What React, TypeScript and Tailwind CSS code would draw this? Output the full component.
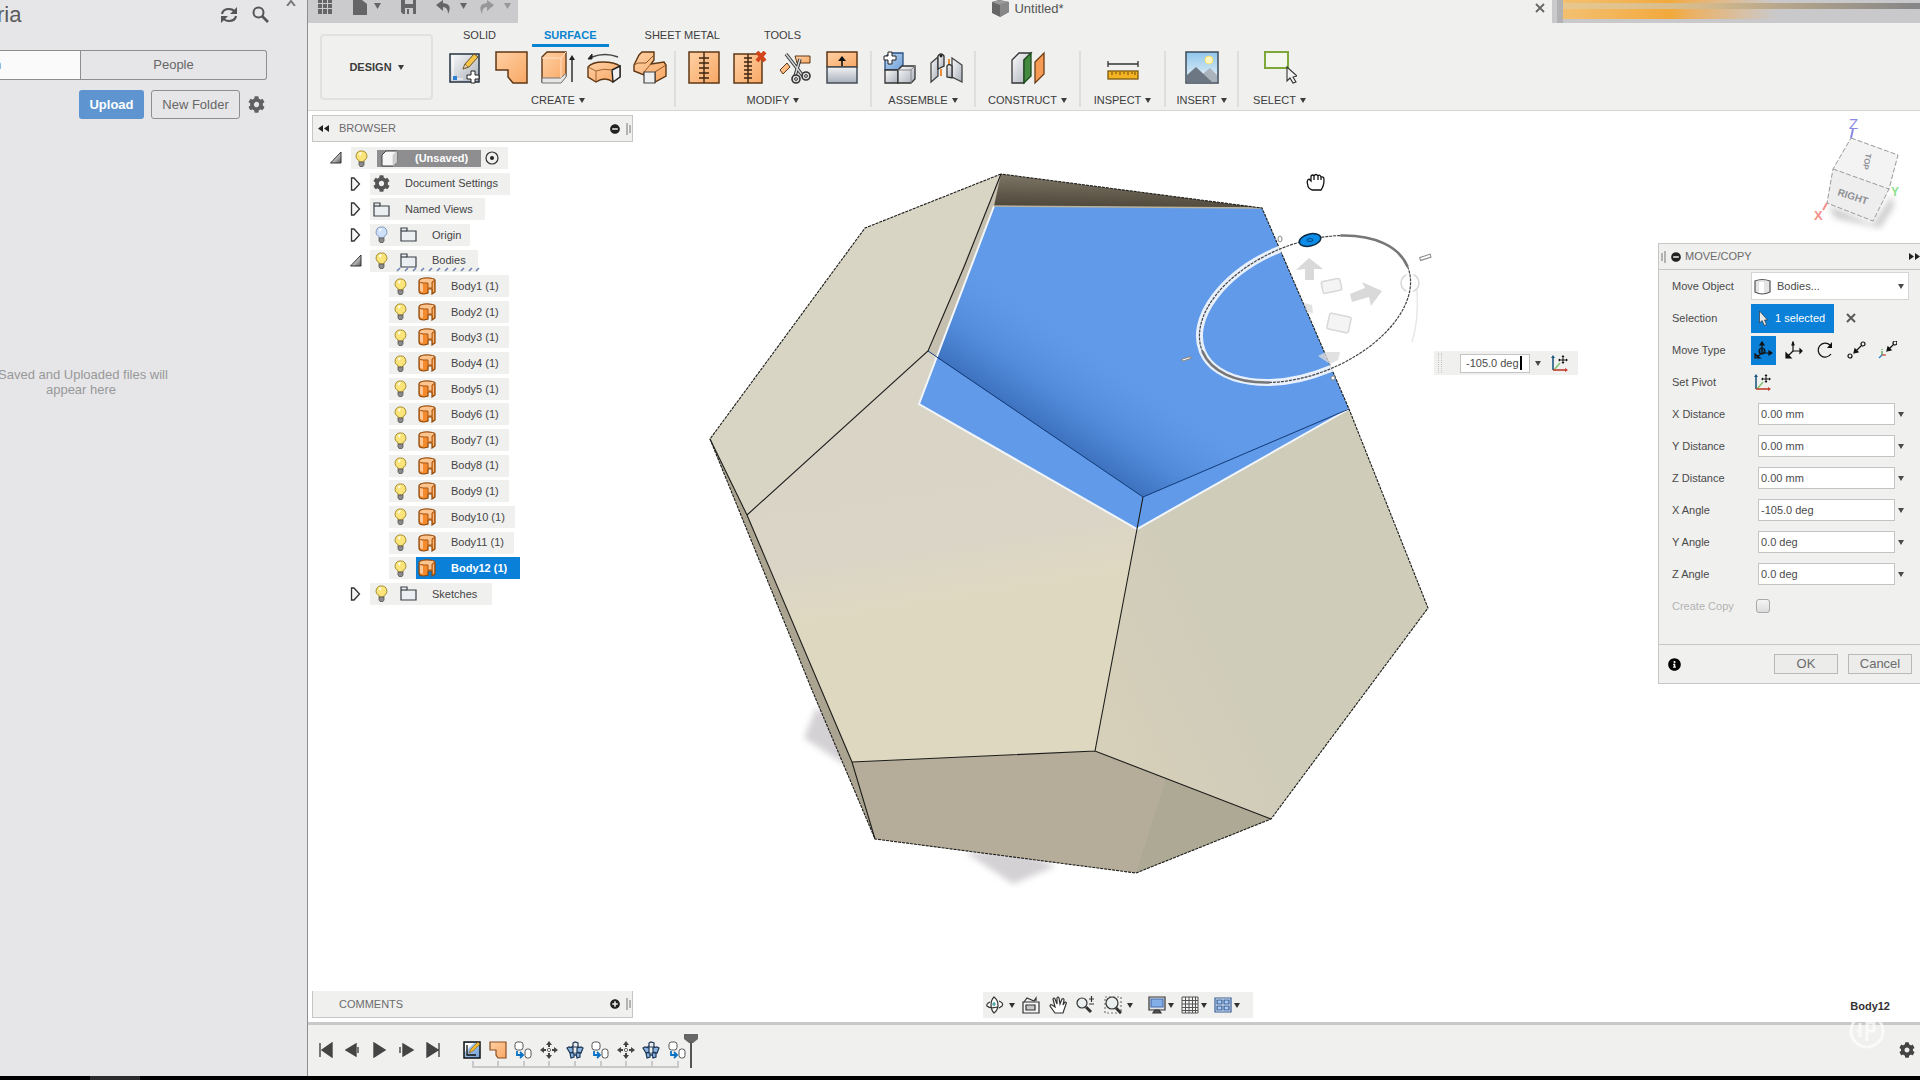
import type { ReactNode } from 'react'
import { FaCog, FaInfoCircle, FaMinusCircle, FaPlusCircle } from 'react-icons/fa'

/* ---------- small shared pieces ---------- */

function Caret({ className = '' }: { className?: string }) {
  return (
    <svg viewBox="0 0 6 5" className={`w-[6px] h-[5px] shrink-0 ${className}`}>
      <path d="M0 0H6L3 5Z" fill="currentColor" />
    </svg>
  )
}

function Bars({ className = '' }: { className?: string }) {
  return (
    <svg viewBox="0 0 5 12" className={`w-[5px] h-[12px] shrink-0 ${className}`}>
      <path d="M1 0V12M4 2V10" stroke="#777" />
    </svg>
  )
}

function Rewind({ className = '' }: { className?: string }) {
  return (
    <svg viewBox="0 0 11 7" className={`w-[11px] h-[7px] shrink-0 ${className}`}>
      <path d="M5 0V7L0 3.5ZM11 0V7L6 3.5Z" fill="#222" />
    </svg>
  )
}

function Gradients() {
  return (
    <svg className="absolute w-0 h-0" aria-hidden="true">
      <defs>
        <linearGradient id="orange" x1="0" y1="0" x2="1" y2="1">
          <stop offset="0" stopColor="#ffd0a4" />
          <stop offset="1" stopColor="#f8a865" />
        </linearGradient>
        <linearGradient id="steel" x1="0" y1="0" x2="1" y2="1">
          <stop offset="0" stopColor="#fbfbfb" />
          <stop offset="1" stopColor="#a9afb9" />
        </linearGradient>
        <linearGradient id="steelDown" x1="0" y1="0" x2="0" y2="1">
          <stop offset="0" stopColor="#f2f3f4" />
          <stop offset="1" stopColor="#a8b0ba" />
        </linearGradient>
        <linearGradient id="sky" x1="0" y1="0" x2="0" y2="1">
          <stop offset="0" stopColor="#8fc6ec" />
          <stop offset="1" stopColor="#eef4f6" />
        </linearGradient>
        <linearGradient id="blue" x1="0" y1="0" x2="1" y2="1">
          <stop offset="0" stopColor="#bcd6f2" />
          <stop offset="1" stopColor="#6f9fd6" />
        </linearGradient>
        <linearGradient id="tri" x1="0" y1="0" x2="1" y2="1">
          <stop offset="0.4" stopColor="#ddd" />
          <stop offset="1" stopColor="#555" />
        </linearGradient>
      </defs>
    </svg>
  )
}

/* ---------- ribbon icons ---------- */

const ribbonIcons: Record<string, ReactNode> = {
  sketch: (
    <>
      <rect x="1" y="3" width="29" height="28" fill="url(#steel)" stroke="#233242" strokeWidth="1.5" />
      <path d="M4 6V28H14" fill="none" stroke="#fff" />
      <path d="M4 25h4v4H4z" fill="#2f7fd0" />
      <path d="M14 18l2-5 9-10 4 3-9 10z" fill="#f5c54a" stroke="#6b5327" />
      <path d="M14 18l2-5 3 3z" fill="#e8d5b5" stroke="#6b5327" strokeWidth=".7" />
      <path d="M22 20h4v4h4v4h-4v4h-4v-4h-4v-4h4z" fill="#fff" stroke="#222" />
    </>
  ),
  patch: <path d="M1 1H32V32H18L13 26V19H1Z" fill="url(#orange)" stroke="#5e3714" strokeWidth="1.5" />,
  extrude: (
    <>
      <path d="M1 6L6 1H25V25L20 31H1Z" fill="url(#orange)" stroke="#5e3714" strokeWidth="1.4" />
      <path d="M1 27H20L25 22V26L20 32H1Z" fill="#e6e6e6" stroke="#777" />
      <path d="M20 7L25 1M20 7V27M1 7H20" stroke="#ffe3c9" fill="none" />
      <path d="M31 31V7" stroke="#222" strokeWidth="1.4" />
      <path d="M28 9L31 4L34 9Z" fill="#222" />
    </>
  ),
  revolve: (
    <>
      <path d="M1 16Q5 11 16 11T33 15V26L26 31Q18 25 9 31L1 26Z" fill="url(#orange)" stroke="#5e3714" strokeWidth="1.4" />
      <path d="M25 19L33 15V26L26 31Z" fill="#f1f1f1" stroke="#222" strokeWidth="1.4" />
      <path d="M1 16L9 20Q17 17 25 19M9 20V30" fill="none" stroke="#9b6534" />
      <path d="M5 6Q18 1 31 6" fill="none" stroke="#444" strokeWidth="1.4" />
      <path d="M1 8L5 3V8Z" fill="#222" stroke="#222" />
    </>
  ),
  sweep: (
    <>
      <path d="M1 14L6 4L9 1H21V9L18 13L31 11L33 14V25L22 31V22H11V24L1 20Z" fill="url(#orange)" stroke="#5e3714" strokeWidth="1.4" />
      <path d="M11 21L18 13M22 21L33 14M1 14L5 12H13L21 4" fill="none" stroke="#8c5526" />
      <path d="M11 21H22V32H11Z" fill="#eee" stroke="#444" strokeWidth="1.2" />
    </>
  ),
  stitch: (
    <>
      <rect x="2" y="1" width="30" height="31" fill="url(#orange)" stroke="#5e3714" strokeWidth="1.5" />
      <path d="M17 1V32M12 7H22M12 12H22M12 17H22M12 22H22M12 27H22" stroke="#3c2510" strokeWidth="1.4" />
    </>
  ),
  unstitch: (
    <>
      <rect x="1" y="3" width="28" height="29" fill="url(#orange)" stroke="#5e3714" strokeWidth="1.5" />
      <path d="M15 3V32M11 7H19M11 11H19M11 15H19M11 19H19M11 23H19M11 27H19" stroke="#3c2510" strokeWidth="1.4" />
      <path d="M24 1L32 10M32 1L24 10" stroke="#d3441a" strokeWidth="4" />
    </>
  ),
  trim: (
    <>
      <path d="M16 5H31V12H18Z" fill="url(#orange)" stroke="#5e3714" />
      <path d="M1 19L8 12L11 16L4 23Z" fill="url(#orange)" stroke="#5e3714" />
      <path d="M7 3L24 25M21 8L16 25" stroke="#333" strokeWidth="3.4" />
      <path d="M7 3L24 25M21 8L16 25" stroke="#d7dadd" strokeWidth="1.4" />
      <circle cx="17" cy="28" r="4" fill="#ddd" stroke="#333" strokeWidth="1.6" />
      <circle cx="27" cy="25" r="4" fill="#ddd" stroke="#333" strokeWidth="1.6" />
      <circle cx="17" cy="28" r="1.4" fill="#f0f0ef" stroke="#333" />
      <circle cx="27" cy="25" r="1.4" fill="#f0f0ef" stroke="#333" />
    </>
  ),
  reverse: (
    <>
      <rect x="2" y="1" width="30" height="15" fill="url(#orange)" stroke="#5e3714" strokeWidth="1.5" />
      <rect x="2" y="16" width="30" height="16" fill="url(#steelDown)" stroke="#444d57" strokeWidth="1.5" />
      <path d="M17 15V8" stroke="#111" strokeWidth="1.6" />
      <path d="M13 10L17 5L21 10Z" fill="#111" />
    </>
  ),
  component: (
    <>
      <path d="M2 6L7 2H20V14L15 19H2Z" fill="url(#blue)" stroke="#28507f" strokeWidth="1.3" />
      <path d="M2 19H15V32H2Z" fill="url(#steel)" stroke="#333" strokeWidth="1.3" />
      <path d="M15 19L19 15H32V28L28 32H15Z" fill="url(#steel)" stroke="#333" strokeWidth="1.3" />
      <path d="M15 19H28V32M28 19L32 15" fill="none" stroke="#888" />
      <path d="M5 1h4v4h4v4H9v4H5V9H1V5h4z" fill="#fff" stroke="#222" />
    </>
  ),
  joint: (
    <>
      <path d="M2 12L9 6V25L2 31Z" fill="url(#steel)" stroke="#444" strokeWidth="1.3" />
      <path d="M9 5Q12 1 15 5V15L9 18Z" fill="url(#steel)" stroke="#333" strokeWidth="1.3" />
      <circle cx="12" cy="5" r="1.4" fill="#222" />
      <path d="M12 18V25M20 8V14" stroke="#e88d3a" strokeWidth="2" />
      <path d="M23 7L33 14V31L23 26Z" fill="url(#steel)" stroke="#444" strokeWidth="1.3" />
      <path d="M18 15Q20 12 23 15V27L18 26Z" fill="url(#steel)" stroke="#333" strokeWidth="1.3" />
    </>
  ),
  plane: (
    <>
      <path d="M1 9L8 2H20L13 9V32H1Z" fill="url(#steel)" stroke="#333" strokeWidth="1.3" />
      <path d="M13 9L20 2V25L13 32Z" fill="#43893f" stroke="#1e4a1d" strokeWidth="1.3" />
      <path d="M24 11L33 2V23L24 32Z" fill="#f59b55" stroke="#6b3c14" strokeWidth="1.3" />
    </>
  ),
  measure: (
    <>
      <path d="M2 13H32M2 10V16M32 10V16" stroke="#333" strokeWidth="1.3" />
      <rect x="2" y="20" width="30" height="8" fill="#f4b322" stroke="#7d5a10" strokeWidth="1.3" />
      <path d="M6 21V24M10 21V23M14 21V24M18 21V23M22 21V24M26 21V23M29 21V24" stroke="#6b4b09" />
    </>
  ),
  image: (
    <>
      <rect x="1" y="1" width="32" height="31" fill="url(#sky)" stroke="#3b4957" strokeWidth="1.5" />
      <circle cx="24" cy="9" r="4" fill="#fff6c4" stroke="#f4e06a" />
      <path d="M14 26L25 17L32 24V31H14Z" fill="#aab2bc" />
      <path d="M2 24L11 16L27 31H2Z" fill="#6d7784" />
    </>
  ),
  select: (
    <>
      <rect x="2" y="1" width="23" height="16" fill="#f4f7ee" stroke="#7fa83a" strokeWidth="2" />
      <path d="M24 16V30L27 27L30 32L33 31L30 26L34 25Z" fill="#f2f2f2" stroke="#333" strokeWidth="1.1" />
    </>
  ),
}

const groups = [
  { label: 'CREATE', width: 'w-[234px]', icons: ['sketch', 'patch', 'extrude', 'revolve', 'sweep'] },
  { label: 'MODIFY', width: 'w-[196px]', icons: ['stitch', 'unstitch', 'trim', 'reverse'] },
  { label: 'ASSEMBLE', width: 'w-[104px]', icons: ['component', 'joint'] },
  { label: 'CONSTRUCT', width: 'w-[105px]', icons: ['plane'] },
  { label: 'INSPECT', width: 'w-[85px]', icons: ['measure'] },
  { label: 'INSERT', width: 'w-[73px]', icons: ['image'] },
  { label: 'SELECT', width: 'w-[81px]', icons: ['select'] },
]

/* ---------- data panel on the left ---------- */

function DataPanel() {
  return (
    <aside className="w-[308px] shrink-0 bg-[#e6e6e8] border-r border-[#8e8e90] overflow-hidden text-[13px] text-[#666]">
      <div className="flex items-start h-[50px]">
        <h1 className="-ml-[3px] text-[22px] leading-[30px] text-[#5a5a5c]">ria</h1>
        <div className="ml-auto flex items-start">
          <button aria-label="Refresh" className="mt-[6px] mr-[14px]">
            <svg viewBox="0 0 18 18" className="w-[18px] h-[18px]" fill="none" stroke="#555" strokeWidth="2.2">
              <path d="M2 8Q3 3 9 3Q13 3 15 6M16 10Q15 15 9 15Q5 15 3 12" />
              <path d="M17 1V8H10ZM1 17V10H8Z" fill="#555" stroke="none" />
            </svg>
          </button>
          <button aria-label="Search" className="mt-[6px] mr-[17px]">
            <svg viewBox="0 0 17 17" className="w-[17px] h-[17px]" fill="none" stroke="#555">
              <circle cx="6.500" cy="6.500" r="5" strokeWidth="2" />
              <path d="M10 10L16 16" strokeWidth="2.600" />
            </svg>
          </button>
          <button aria-label="Close" className="mr-[11px]">
            <svg viewBox="0 0 10 6" className="w-[10px] h-[6px]" stroke="#777" strokeWidth="2">
              <path d="M1 6L5 1L9 6" fill="none" />
            </svg>
          </button>
        </div>
      </div>
      <div className="flex h-[30px] mr-[40px] border border-l-0 border-[#8e8e90] rounded-r-[3px]">
        <button className="w-[81px] bg-[#fafafa] border-r border-[#8e8e90] text-left"><span className="-ml-[6px]">n</span></button>
        <button className="flex-1">People</button>
      </div>
      <div className="flex items-center h-[29px] mt-[10px] pl-[79px] gap-[7px]">
        <button className="w-[65px] h-full bg-[#5e95d0] text-white font-bold rounded-[3px]">Upload</button>
        <button className="w-[89px] h-full border border-[#8e8e90] rounded-[3px]">New Folder</button>
        <button aria-label="Settings" className="ml-[1px]"><FaCog className="w-[17px] h-[17px] text-[#606062]" /></button>
      </div>
      <p className="mt-[248px] w-[166px] -ml-[2px] text-center leading-[15px] whitespace-nowrap text-[#98989a]">
        Saved and Uploaded files will<br />appear here
      </p>
    </aside>
  )
}

/* ---------- header ---------- */

function TitleBar() {
  return (
    <div className="flex h-[23px]">
      <div className="flex w-[210px] bg-[#cbcacc] text-[#666]">
        <svg viewBox="0 0 210 23" className="w-[210px] h-[23px]" fill="#656567">
          <path d="M10 0h4v3h-4zM15 0h4v3h-4zM20 0h4v3h-4zM10 4h4v4h-4zM15 4h4v4h-4zM20 4h4v4h-4zM10 9h4v5h-4zM15 9h4v5h-4zM20 9h4v5h-4z" />
          <path d="M45 0H54L59 4V15H45Z" />
          <path d="M66 3H73L69.500 9Z" />
          <path d="M93 0H108V14H95L93 12Z" />
          <path d="M97 0h8v4h-8zM97 8h8v6h-8z" fill="#cbcacc" />
          <path d="M99 9h2v5h-2z" />
          <path d="M135 0L128 5L135 11V7Q140 7 140 14Q145 4 135 3Z" />
          <path d="M152 3H159L155.500 9Z" />
          <g fill="#979799">
            <path d="M179 0L186 5L179 11V7Q174 7 174 14Q169 4 179 3Z" />
            <path d="M196 3H203L199.500 9Z" />
          </g>
        </svg>
      </div>
      <div className="flex-1 flex items-start justify-center relative">
        <div className="flex items-center gap-[5px] pr-[14px] text-[13px] leading-[17px] text-[#555]">
          <svg viewBox="0 0 17 17" className="w-[17px] h-[17px]">
            <path d="M0 2L7 0L17 2V12L8 17L0 13Z" fill="#666" />
            <path d="M0 2L8 5L17 2L8 0Z" fill="#999" />
            <path d="M8 5L17 2V12L8 17Z" fill="#888" />
          </svg>
          Untitled*
        </div>
        <button aria-label="Close document" className="absolute right-[7px] top-[3px]">
          <svg viewBox="0 0 10 10" className="w-[10px] h-[10px]" stroke="#666" strokeWidth="1.800">
            <path d="M1 1L9 9M9 1L1 9" />
          </svg>
        </button>
      </div>
      <div className="w-[368px] bg-[#c9c9cb] flex">
        <div className="w-[11px] border-r-[6px] border-[#b2b2b4]" />
        <div className="flex-1 h-[19px] bg-linear-to-r from-[#f3c070] via-[#f2a93b] via-30% to-[#c9c9cb] to-60%">
          <div className="mt-[3px] h-[6px] bg-linear-to-r from-[#e8c88e] via-[#d3b98c] via-40% to-[#858587]" />
        </div>
      </div>
    </div>
  )
}

function Ribbon() {
  return (
    <div className="flex h-[88px] border-b border-[#d6d6d6] text-[11px] text-[#3c3c3c]">
      <button className="ml-3 mt-[11px] w-[113px] h-[66px] shrink-0 border-2 border-[#e1e1e0] rounded-[4px] font-bold flex items-center justify-center gap-[6px]">
        DESIGN <Caret />
      </button>
      <div className="ml-[9px]">
        <nav className="flex gap-6 ml-[9px] h-[24px] leading-[24px]">
          <a href="#" className="px-3">SOLID</a>
          <a href="#" className="px-3 font-bold text-[#0a84d0] border-b-[3px] border-[#0a84d0]">SURFACE</a>
          <a href="#" className="px-3">SHEET METAL</a>
          <a href="#" className="px-2">TOOLS</a>
        </nav>
        <div className="flex mt-[4px]">
          {groups.map((group) => (
            <div key={group.label} className={`${group.width} h-[56px] border-r-2 border-[#dededd] last:border-r-0 flex flex-col items-center`}>
              <div className="flex gap-3">
                {group.icons.map((icon) => (
                  <button key={icon} aria-label={icon}>
                    <svg viewBox="0 0 34 34" className="block w-[34px] h-[34px]">{ribbonIcons[icon]}</svg>
                  </button>
                ))}
              </div>
              <button className="flex items-center gap-[4px] mt-[8px] leading-[14px]">
                {group.label} <Caret />
              </button>
            </div>
          ))}
        </div>
      </div>
    </div>
  )
}

/* ---------- browser tree ---------- */

function Bulb({ off = false }: { off?: boolean }) {
  return (
    <svg viewBox="0 0 13 17" className="w-[13px] h-[17px] shrink-0">
      <path d="M6.500 1A5 5 0 0 1 9 10.500V12H4V10.500A5 5 0 0 1 6.500 1Z" fill={off ? '#cfe0fa' : '#fbe47a'} stroke={off ? '#7f95bd' : '#a58b2c'} />
      <path d="M4 3.500Q5 2 7 2.500L5 6Z" fill="#fff" />
      <path d="M4 12H9V15L8 16.500H5L4 15Z" fill="#8b8b8b" stroke="#555" strokeWidth=".8" />
    </svg>
  )
}

function Folder() {
  return (
    <svg viewBox="0 0 17 15" className="w-[17px] h-[15px] shrink-0">
      <path d="M1 14V1H7V4H16V14Z" fill="#eceff1" stroke="#3b4046" strokeWidth="1.200" />
      <path d="M1 4H7" stroke="#3b4046" strokeWidth="1.200" />
    </svg>
  )
}

function Twisty({ open = false }: { open?: boolean }) {
  return (
    <button aria-label={open ? 'Collapse' : 'Expand'} className="w-[20px] shrink-0">
      <svg viewBox="0 0 12 14" className="w-[12px] h-[14px]">
        {open
          ? <path d="M11 1V12H0.500Z" fill="url(#tri)" stroke="#333" />
          : <path d="M1.500 1L4 1L9.500 7L4 13H1.500Z" fill="#f5f5f5" stroke="#333" strokeWidth="1.300" />}
      </svg>
    </button>
  )
}

function BodyIcon() {
  return (
    <svg viewBox="0 0 18 18" className="w-[18px] h-[18px] shrink-0">
      <path d="M1 4Q1 1 9 1T17 3V15L14 17V12H10V16L6 17Q1 17 1 14Z" fill="#f58a2c" stroke="#8c4607" strokeWidth="1.200" />
      <path d="M1 4Q2 1 9 1T17 3L14 5V11H10V6H6Q1 6 1 4Z" fill="#fcc48f" stroke="#a5581a" />
      <path d="M2 6L5 7V15L2 14Z" fill="#fdc79a" />
      <path d="M15 6L16 5V14L15 15Z" fill="#fcb87c" />
    </svg>
  )
}

const bodies = Array.from({ length: 12 }, (_, i) => `Body${i + 1} (1)`)

function Tree() {
  return (
    <ul className="flex flex-col justify-between h-[458px] mt-[5px] text-[11px] text-[#444]">
      <li className="flex items-center h-[22px] pl-[18px]">
        <Twisty open />
        <div className="flex items-center h-full ml-px bg-[#f0f0ef] pl-[4px] pr-[9px]">
          <Bulb />
          <span className="flex items-center ml-[9px] h-[17px] bg-[#8e8e90] pl-[4px] pr-[13px] text-white font-bold">
            <svg viewBox="0 0 17 17" className="w-[17px] h-[17px] mr-[17px]">
              <path d="M1 5L5 1H16V12L12 16H1Z" fill="#f6f6f6" stroke="#444" />
              <path d="M12 16V5L16 1V12Z" fill="#cfcfcf" stroke="#bbb" strokeWidth=".5" />
            </svg>
            (Unsaved)
          </span>
          <svg viewBox="0 0 14 14" className="w-[14px] h-[14px] ml-[4px]">
            <circle cx="7" cy="7" r="6" fill="none" stroke="#333" strokeWidth="1.200" />
            <circle cx="7" cy="7" r="2" fill="#222" />
          </svg>
        </div>
      </li>
      <li className="flex items-center h-[22px] pl-[38px]">
        <Twisty />
        <div className="flex items-center h-full bg-[#f0f0ef] pl-[3px] pr-[12px]">
          <FaCog className="w-[17px] h-[17px] mr-[15px] text-[#555]" /> Document Settings
        </div>
      </li>
      <li className="flex items-center h-[22px] pl-[38px]">
        <Twisty />
        <div className="flex items-center gap-[15px] h-full bg-[#f0f0ef] pl-[3px] pr-[12px]"><Folder /> Named Views</div>
      </li>
      <li className="flex items-center h-[22px] pl-[38px]">
        <Twisty />
        <div className="flex items-center h-full bg-[#f0f0ef] pl-[5px] pr-[9px]">
          <Bulb off /><span className="flex items-center gap-[15px] ml-[12px]"><Folder /> Origin</span>
        </div>
      </li>
      <li className="flex items-center h-[22px] pl-[38px]">
        <Twisty open />
        <div className="relative flex items-center h-full bg-[#f0f0ef] pl-[5px] pr-[12px]">
          <Bulb /><span className="flex items-center gap-[15px] ml-[12px]"><Folder /> Bodies</span>
          <svg viewBox="0 0 84 5" className="absolute left-[26px] bottom-0 w-[84px] h-[5px]">
            <path d="M1 4L4 1M9 4L12 1M17 4L20 1M25 4L28 1M33 4L36 1M41 4L44 1M49 4L52 1M57 4L60 1M65 4L68 1M73 4L76 1M80 4L83 1" stroke="#6e86b0" strokeWidth="1.600" />
          </svg>
        </div>
      </li>
      {bodies.map((name, i) => {
        const selected = i === 11
        return (
          <li key={name} className="flex items-center h-[22px] pl-[77px]">
            <div className="flex items-center h-full bg-[#f0f0ef] pl-[5px]">
              <Bulb />
              <span className={`flex items-center h-full ml-[9px] pl-[2px] gap-[15px] ${selected ? 'bg-[#0a80d8] text-white font-bold pr-[13px]' : 'pr-[10px]'}`}>
                <BodyIcon /> {name}
              </span>
            </div>
          </li>
        )
      })}
      <li className="flex items-center h-[22px] pl-[38px]">
        <Twisty />
        <div className="flex items-center h-full bg-[#f0f0ef] pl-[5px] pr-[15px]">
          <Bulb /><span className="flex items-center gap-[15px] ml-[12px]"><Folder /> Sketches</span>
        </div>
      </li>
    </ul>
  )
}

/* ---------- 3D scene ---------- */

function Scene() {
  return (
    <svg viewBox="308 111 1612 911" className="absolute inset-0 w-full h-full" fontFamily="Liberation Sans, Arial, sans-serif">
      <defs>
        <linearGradient id="front" x1="0.300" y1="0" x2="0.450" y2="1">
          <stop offset="0" stopColor="#d8d4c6" />
          <stop offset="0.500" stopColor="#dad5c6" />
          <stop offset="0.620" stopColor="#dfd8c1" />
          <stop offset="1" stopColor="#dfd8c1" />
        </linearGradient>
        <linearGradient id="right" x1="0" y1="0.700" x2="0.500" y2="0.400">
          <stop offset="0" stopColor="#d6cfb9" />
          <stop offset="0.700" stopColor="#cfccba" />
        </linearGradient>
        <linearGradient id="inside" x1="0" y1="0.900" x2="0.100" y2="0">
          <stop offset="0" stopColor="#3d372c" />
          <stop offset="1" stopColor="#7d7564" />
        </linearGradient>
        <linearGradient id="pocket" gradientUnits="userSpaceOnUse" x1="1040" y1="427" x2="1100" y2="338">
          <stop offset="0" stopColor="#3468b4" stopOpacity=".8" />
          <stop offset="0.350" stopColor="#3f78c8" stopOpacity=".45" />
          <stop offset="1" stopColor="#609ae8" stopOpacity="0" />
        </linearGradient>
        <filter id="soft"><feGaussianBlur stdDeviation="3" /></filter>
      </defs>

      {/* ground shadows */}
      <g fill="#d4d1d4" filter="url(#soft)">
        <path d="M816 708L804 738L850 768L840 720Z" />
        <path d="M965 852L1013 884L1056 866L1020 850Z" />
      </g>

      {/* faces */}
      <path d="M1001 174L865 228L710 439L747 515L928 351L994 206Z" fill="#d8d5c5" />
      <path d="M710 439L747 515L852 762L875 839L812 690Z" fill="#aaa490" />
      <path d="M1001 174L1262 208L994 206L982 222Z" fill="url(#inside)" />
      <path d="M1001 174L928 351L936 357L994 206Z" fill="#c4bfae" />
      <path d="M747 515L928 351L1137 529L1095 751L852 762Z" fill="url(#front)" />
      <path d="M1137 529L1349 409L1428 608L1271 819L1095 751Z" fill="url(#right)" />
      <path d="M852 762L1095 751L1271 819L1136 873L875 839Z" fill="#b5ad99" />
      <path d="M1166 779L1271 819L1136 873Z" fill="#aea995" />

      {/* selected body */}
      <path d="M994 206L1262 208L1349 409L1137 529L919 404Z" fill="#609ae8" />
      <path d="M994 206L1262 208L1349 409L1143 497L936 357Z" fill="url(#pocket)" />
      <path d="M994 206L919 404L1137 529L1349 409" fill="none" stroke="#f2f6fa" strokeWidth="2" />
      <path d="M994 206L1262 208" stroke="#b9b29c" strokeWidth="1.500" />

      {/* edges */}
      <g fill="none" stroke="#1c1c1a" strokeWidth="1.100">
        <path d="M747 515L928 351L964 267L1001 174M747 515L852 762L875 839M852 762L1095 751L1271 819M1095 751L1137 529L1143 497" />
        <path d="M710 439L747 515" />
        <path d="M928 351L1143 497L1349 409" stroke="#123a78" strokeWidth="1" />
        <path d="M1001 174L865 228L710 439L812 690L875 839L1136 873L1271 819L1428 608L1349 409L1262 208L1001 174" strokeDasharray="3 1" />
      </g>

      {/* move manipulator */}
      <g fill="#d9d9d9">
        <path d="M1309 258L1323 269L1314 269V280H1305V269L1296 270Z" />
        <path d="M1350 294L1365 288L1362 282L1382 291L1371 306L1369 297L1352 302Z" />
        <path d="M1304 303L1312 305L1313 313L1307 312ZM1318 356L1326 352L1340 352L1338 360L1330 364Z" opacity=".8" />
      </g>
      <g fill="#f4f4f4" stroke="#d8d8d8" strokeWidth="1.500">
        <rect x="1322" y="280" width="19" height="12" rx="2" transform="rotate(-12 1331 286)" />
        <rect x="1328" y="315" width="22" height="16" rx="2" transform="rotate(12 1339 323)" />
        <circle cx="1410" cy="283" r="9" fill="none" />
        <path d="M1417 290Q1419 320 1412 342" fill="none" stroke="#e8e8e8" />
      </g>
      <g transform="rotate(-22.400 1305 309)" fill="none">
        <ellipse cx="1305" cy="309" rx="111" ry="65" stroke="#fff" strokeWidth="7" opacity=".85" />
        <ellipse cx="1305" cy="309" rx="111" ry="65" stroke="#444" strokeWidth="1.200" strokeDasharray="3 1" />
        <ellipse cx="1305" cy="309" rx="111" ry="65" pathLength="100" stroke="#777" strokeWidth="2.600" strokeDasharray="14 36 14 36" strokeDashoffset="14" />
      </g>
      <ellipse cx="1310" cy="240" rx="11" ry="6" fill="#0a8ce8" stroke="#0d2b44" strokeWidth="1.500" transform="rotate(-14 1310 240)" />
      <ellipse cx="1310" cy="240" rx="3" ry="1.500" fill="none" stroke="#07477c" />
      <g fill="#fff" stroke="#888" strokeWidth="1">
        <ellipse cx="1280" cy="239" rx="2" ry="3" />
        <rect x="1420" y="256" width="11" height="3" transform="rotate(-18 1425 258)" />
        <rect x="1182" y="358" width="9" height="2" transform="rotate(-18 1186 359)" />
        <circle cx="1333" cy="378" r="2" />
      </g>

      {/* grab cursor */}
      <path d="M1308 186Q1306 180 1309 179L1311 181V176Q1313 174 1314 176Q1316 173 1318 176Q1320 174 1321 177Q1324 176 1324 180Q1324 186 1321 190H1312Q1308 188 1308 186ZM1314 176V180M1318 176V180M1321 177V180" fill="#fff" stroke="#111" strokeWidth="1.300" />

      {/* view cube */}
      <path d="M1828 205L1873 224L1892 195L1894 206L1880 228L1835 218Z" fill="#ccc" filter="url(#soft)" />
      <path d="M1851 138L1898 155L1889 189L1833 169Z" fill="#f3f3f4" />
      <path d="M1833 169L1889 189L1873 221L1827 203Z" fill="#eeeeef" />
      <path d="M1851 138L1898 155L1889 189L1873 221L1827 203L1833 169ZM1833 169L1889 189" fill="none" stroke="#999" strokeDasharray="5 2" />
      <text x="1837" y="195" fontSize="10" fontWeight="bold" fill="#8f8f93" transform="rotate(18 1837 195)">RIGHT</text>
      <text x="1866" y="153" fontSize="8" fontWeight="bold" fill="#8f8f93" transform="rotate(102 1866 153)">TOP</text>
      <path d="M1851 138L1853 129" stroke="#8a8ae6" strokeWidth="2" />
      <path d="M1827 203L1823 210" stroke="#f39088" strokeWidth="2" />
      <text x="1849" y="129" fontSize="15" fill="#8a8ae6">Z</text>
      <text x="1814" y="220" fontSize="13" fontWeight="bold" fill="#f39088">X</text>
      <text x="1891" y="196" fontSize="12" fontWeight="bold" fill="#8fe08f">Y</text>
    </svg>
  )
}

/* ---------- move/copy dialog ---------- */

function Pivot() {
  return (
    <svg viewBox="0 0 18 18" className="w-[18px] h-[18px] shrink-0" fill="none">
      <path d="M2 16V3" stroke="#1f5a80" strokeWidth="1.600" />
      <path d="M0 4L2 1L4 4Z" fill="#1f5a80" />
      <path d="M3 16L9 9" stroke="#7cc46b" strokeWidth="1.400" />
      <path d="M2 16H15" stroke="#c43d2c" strokeWidth="1.600" />
      <path d="M14 14L17 16L14 18Z" fill="#c43d2c" />
      <path d="M12 2V9M8 6H16" stroke="#111" />
      <path d="M10.500 3L12 1L13.500 3ZM10.500 8L12 10L13.500 8ZM9 4.500L7 6L9 7.500ZM15 4.500L17 6L15 7.500Z" fill="#111" />
    </svg>
  )
}

const moveTypes = [
  {
    name: 'Free Move',
    art: <path d="M8 12V2M8 12H17M8 12L3 16M6 4L8 1L10 4ZM15 10L18 12L15 14ZM1 13V17H6ZM8 10m-3 0a3 3 0 1 0 6 0a3 3 0 1 0-6 0" />,
  },
  { name: 'Translate', art: <path d="M8 10V3M8 10H16M8 10L3 15M7 4L8 1L9 4ZM15 8L17 10L15 12ZM1 12V17H6Z" /> },
  { name: 'Rotate', art: <path d="M15 13A7 7 0 1 1 14 4" fill="none" /> },
  {
    name: 'Point to Point',
    art: (
      <>
        <circle cx="3" cy="15" r="2" fill="none" />
        <circle cx="16" cy="3" r="2" fill="none" />
        <path d="M14 5L9 10M7 12L8 8L11 11Z" />
      </>
    ),
  },
  {
    name: 'Point to Position',
    art: (
      <>
        <circle cx="17" cy="2" r="2" fill="none" />
        <path d="M15 4L11 8M9 10L10 6L13 9Z" />
        <path d="M4 10V14M4 8V9" stroke="#3f9a46" />
        <path d="M4 14H8" stroke="#c43d2c" />
        <path d="M4 14L1 17" stroke="#2b7fc2" />
      </>
    ),
  },
]

const fields = [
  { id: 'xd', label: 'X Distance', value: '0.00 mm' },
  { id: 'yd', label: 'Y Distance', value: '0.00 mm' },
  { id: 'zd', label: 'Z Distance', value: '0.00 mm' },
  { id: 'xa', label: 'X Angle', value: '-105.0 deg' },
  { id: 'ya', label: 'Y Angle', value: '0.0 deg' },
  { id: 'za', label: 'Z Angle', value: '0.0 deg' },
]

function MovePanel() {
  return (
    <form className="absolute right-0 top-[132px] w-[262px] bg-[#f0f0ef] border border-r-0 border-[#c6c6c6] text-[11px] text-[#4a4a4a]">
      <div className="flex items-center h-[26px] border-b border-[#c6c6c6] pl-[2px] text-[#6b6b6b]">
        <Bars className="rotate-180" />
        <FaMinusCircle className="ml-[5px] mr-[4px] w-[10px] h-[10px] text-[#222]" />
        MOVE/COPY
        <Rewind className="ml-auto rotate-180" />
      </div>
      <div className="flex items-center h-[32px] pl-[13px]">
        <label htmlFor="object" className="w-[79px]">Move Object</label>
        <div className="relative w-[158px]">
          <svg viewBox="0 0 17 17" className="absolute left-[3px] top-[6px] w-[17px] h-[17px]">
            <path d="M1 3Q8 0 16 3V14Q8 18 1 14Z" fill="#e4e4e4" stroke="#555" strokeWidth="1.200" />
            <path d="M5 4H10V15H5Z" fill="#fff" />
          </svg>
          <select id="object" className="appearance-none w-full h-[28px] bg-white border border-[#d5d5d5] pl-[25px]">
            <option>Bodies...</option>
          </select>
          <Caret className="absolute right-[5px] top-[12px]" />
        </div>
      </div>
      <div className="flex items-center h-[32px] pl-[13px]">
        <span className="w-[79px]">Selection</span>
        <button type="button" className="flex items-center gap-[7px] w-[83px] h-[29px] pl-[8px] bg-[#0a80d8] text-white">
          <svg viewBox="0 0 9 16" className="w-[9px] h-[16px]">
            <path d="M0.500 1V13L3 10.500L5.500 15.500L7.500 14.500L5.500 10H8.500Z" fill="#e9e9e9" stroke="#333" strokeWidth=".7" />
          </svg>
          1 selected
        </button>
        <button type="button" aria-label="Clear selection" className="ml-[12px]">
          <svg viewBox="0 0 10 10" className="w-[10px] h-[10px]" stroke="#5a5a5a" strokeWidth="2"><path d="M1 1L9 9M9 1L1 9" /></svg>
        </button>
      </div>
      <div className="flex items-center h-[32px] pl-[13px]">
        <span className="w-[79px]">Move Type</span>
        <div className="flex gap-[6px]">
          {moveTypes.map((type, i) => (
            <button type="button" key={type.name} aria-label={type.name} className={`flex items-center justify-center w-[25px] h-[29px] ${i === 0 ? 'bg-[#0a80d8]' : ''}`}>
              <svg viewBox="0 0 19 18" className="w-[19px] h-[18px] text-[#111]" fill="currentColor" stroke="currentColor" strokeWidth="1.200">
                {type.name === 'Rotate' && <path d="M16 1V7H11Z" stroke="none" />}
                <g fillOpacity={i === 0 ? 0.4 : 1}>{type.art}</g>
              </svg>
            </button>
          ))}
        </div>
      </div>
      <div className="flex items-center h-[32px] pl-[13px]">
        <span className="w-[82px]">Set Pivot</span>
        <button type="button" aria-label="Set pivot"><Pivot /></button>
      </div>
      {fields.map((field) => (
        <div key={field.id} className="flex items-center h-[32px] pl-[13px]">
          <label htmlFor={field.id} className="w-[86px]">{field.label}</label>
          <input id={field.id} defaultValue={field.value} className="w-[137px] h-[22px] bg-white border border-[#c4c4c4] px-[2px]" />
          <button type="button" aria-label={`${field.label} options`} className="ml-[3px]"><Caret /></button>
        </div>
      ))}
      <div className="flex items-center h-[32px] pl-[13px] text-[#b3b3b3]">
        <label htmlFor="copy" className="w-[84px]">Create Copy</label>
        <input id="copy" type="checkbox" disabled className="appearance-none w-[14px] h-[14px] rounded-[3px] border border-[#a9a9a9] bg-linear-to-b from-[#f5f5f5] to-[#dcdcdc]" />
      </div>
      <div className="flex items-center gap-[10px] h-[39px] mt-[22px] border-t border-[#c6c6c6] pl-[9px] pr-[8px] text-[13px] text-[#6b6b6b]">
        <FaInfoCircle className="w-[13px] h-[13px] mr-auto text-black" />
        <button type="button" className="w-[64px] h-[20px] leading-[18px] border border-[#b9b9b9] bg-[#ececeb]">OK</button>
        <button type="button" className="w-[64px] h-[20px] leading-[18px] border border-[#b9b9b9] bg-[#ececeb]">Cancel</button>
      </div>
    </form>
  )
}

/* ---------- navigation bar ---------- */

const navItems = [
  {
    name: 'Orbit',
    art: <><path d="M8 1Q12 4 12 9T8 17Q5 14 5 9T8 1ZM4 6Q0 8 1 10Q4 13 12 11M13 5Q18 7 16 10L13 12" fill="#fff" /><path d="M8 6V10M6 8H10" stroke="#2d9a9a" /></>,
    gap: 'w-[36px]', caret: true,
  },
  {
    name: 'Look At',
    art: <><path d="M1 6H17V17H1Z" fill="#f5f5f5" /><path d="M2 6L5 2L12 5L14 2V5" fill="none" /><path d="M4 9H13V14H4Z" fill="#c7c7c7" /></>,
    gap: 'w-[27px]', caret: false,
  },
  {
    name: 'Pan',
    art: <path d="M6 17L1 10Q1 8 3 9L6 11L4 3Q5 1 6 3L8 8V2Q9 0 10 2L11 8L13 3Q15 2 15 4L14 9L16 6Q18 6 17 8L14 17Z" fill="#fff" />,
    gap: 'w-[27px]', caret: false,
  },
  {
    name: 'Zoom',
    art: <><path d="M10 11L15 16" strokeWidth="3" /><circle cx="6" cy="7" r="5" fill="#e8efee" /><path d="M13 3H18M15.500 0V6M13 8H18" /></>,
    gap: 'w-[28px]', caret: false,
  },
  {
    name: 'Fit',
    art: <><path d="M1 1H17V17H1Z" fill="none" strokeDasharray="2 2" stroke="#777" /><path d="M12 12L17 17" strokeWidth="3" /><circle cx="8" cy="7" r="6" fill="#e8efee" /></>,
    gap: 'w-[44px]', caret: true,
  },
  {
    name: 'Display Settings',
    art: <><path d="M1 1H17V14H1Z" fill="#dfe3e8" /><path d="M3 3H15V11H3Z" fill="#83aee8" stroke="#4a6fae" /><path d="M5 17H13L11 14H7Z" fill="#555" /></>,
    gap: 'w-[33px]', caret: true,
  },
  {
    name: 'Grid and Snaps',
    art: <path d="M1 1H17V17H1ZM4.500 1V17M8 1V17M11.500 1V17M14.500 1V17M1 4.500H17M1 8H17M1 11.500H17M1 14.500H17" fill="#f3f3f3" stroke="#555" strokeWidth="1" />,
    gap: 'w-[33px]', caret: true,
  },
  {
    name: 'Viewports',
    art: <><path d="M1 2H17V16H1Z" fill="#e8f0fa" stroke="#335a94" /><path d="M3 4H8V8H3ZM10 4H15V8H10ZM3 10H8V14H3ZM10 10H15V14H10Z" fill="#a9c8f2" stroke="#335a94" /></>,
    gap: 'w-[30px]', caret: true,
  },
]

function NavBar() {
  return (
    <div className="absolute inset-x-0 bottom-[4px] pl-2 flex justify-center">
      <div className="flex items-center h-[26px] w-[270px] pl-[3px] bg-[#f0f0ef] text-[#333]">
        {navItems.map((item, i) => (
          <button key={item.name} aria-label={item.name} className={`flex items-center shrink-0 ${item.gap} ${i < 1 || i === 4 ? 'gap-[5px]' : 'gap-[2px]'}`}>
            <svg viewBox="0 0 18 18" className="w-[18px] h-[18px] shrink-0" stroke="#333" strokeWidth="1.200">{item.art}</svg>
            {item.caret && <Caret />}
          </button>
        ))}
      </div>
    </div>
  )
}

/* ---------- timeline ---------- */

const playback = [
  { name: 'Start', d: 'M2 1V15M14 1V15L4 8Z' },
  { name: 'Step back', d: 'M11 2V14L1 8ZM13 5V11' },
  { name: 'Play', d: 'M2 1V15L13 8Z' },
  { name: 'Step forward', d: 'M4 2V14L14 8ZM1 5V11' },
  { name: 'End', d: 'M1 1V15L12 8ZM13 1V15' },
]

const featureArt: Record<string, ReactNode> = {
  sketch: (
    <>
      <rect x="1" y="1" width="16" height="16" fill="url(#blue)" stroke="#111" strokeWidth="1.500" />
      <path d="M2 2H11L2 11Z" fill="#fff" />
      <path d="M4 4V14H13" stroke="#111" fill="none" strokeWidth="1.300" />
      <path d="M6 12L8 8L15 1L17 3L10 10Z" fill="#f5b92e" stroke="#7d5a10" strokeWidth=".6" />
    </>
  ),
  patch: <path d="M1 1H17V17H9L7 14V9H1Z" fill="url(#orange)" stroke="#8c4f22" strokeWidth="1.200" />,
  copy: (
    <>
      <rect x="1" y="1" width="8" height="8" rx="2.500" fill="#fff" stroke="#555" />
      <rect x="11" y="8" width="6" height="9" rx="2.500" fill="#fff" stroke="#555" />
      <path d="M3 10V14H8M6 11L9 14L6 17" fill="none" stroke="#0a72c4" strokeWidth="1.800" />
    </>
  ),
  move: (
    <>
      <path d="M9 0L12 4H10V6H8V4H6ZM9 18L12 14H10V12H8V14H6ZM0 9L4 6V8H6V10H4V12ZM18 9L14 6V8H12V10H14V12Z" fill="#444" />
      <circle cx="9" cy="9" r="1.600" fill="#fff" stroke="#666" />
    </>
  ),
  pattern: (
    <>
      <path d="M9 4L3 8L6 14H12L15 8Z" fill="none" stroke="#2a4f7a" strokeWidth="1.600" />
      <g fill="#8bb4e0" stroke="#1d3654" strokeWidth="1.200">
        <path d="M7 2L9 1L12 2V6H7Z" fill="#eee" />
        <path d="M1 7L3 6L7 7V11L4 12ZM11 7L15 6L17 7L15 12L11 11ZM4 12H8V16L5 17ZM10 12H14V16L11 17Z" />
      </g>
    </>
  ),
}

const features = ['sketch', 'patch', 'copy', 'move', 'pattern', 'copy', 'move', 'pattern', 'copy']

function Timeline() {
  return (
    <footer className="relative flex items-start h-[54px] border-t-[3px] border-[#c9c9c9] bg-[#f0f0ef]">
      <div className="flex gap-[11px] pl-[10px] pt-[17px]">
        {playback.map((step) => (
          <button key={step.name} aria-label={step.name}>
            <svg viewBox="0 0 16 16" className="block w-[16px] h-[16px]"><path d={step.d} fill="#444" stroke="#444" strokeWidth="1.400" /></svg>
          </button>
        ))}
      </div>
      <div className="ml-[21px] pt-[16px]">
        <div className="flex w-[223px] justify-between">
          {features.map((name, i) => (
            <button key={i} aria-label={name}>
              <svg viewBox="0 0 18 18" className="block w-[18px] h-[18px]">{featureArt[name]}</svg>
            </button>
          ))}
        </div>
        <svg viewBox="0 0 224 8" className="block w-[224px] h-[8px] mt-[2px]">
          <path d="M10 0V6H215V0M35 0V6M61 0V6M86 0V6M112 0V6M138 0V6M163 0V6M189 0V6" fill="none" stroke="#c9c9c9" strokeWidth="2" />
        </svg>
      </div>
      <svg viewBox="0 0 14 34" className="w-[14px] h-[34px] mt-[9px] -ml-[3px]">
        <path d="M0 0H14V5L9 9H5L0 5Z" fill="#666" />
        <path d="M7 8V34" stroke="#555" strokeWidth="2" />
      </svg>
      <button aria-label="Timeline settings" className="ml-auto mr-[5px] mt-[17px]"><FaCog className="w-[16px] h-[16px] text-[#444]" /></button>
    </footer>
  )
}

/* faint round channel mark in the corner */
function Watermark() {
  return (
    <svg viewBox="0 0 40 40" className="absolute right-[33px] bottom-[29px] w-[40px] h-[40px] opacity-70" fill="none" stroke="#fff" strokeWidth="3">
      <circle cx="20" cy="20" r="16" />
      <path d="M13 12V26M20 8V30M20 12H27V20H20M10 20H14" />
    </svg>
  )
}

export default function App() {
  return (
    <div className="relative min-h-screen flex flex-col bg-black font-['Liberation_Sans',Arial,sans-serif]">
      <Gradients />
      <div className="flex-1 flex">
        <DataPanel />
        <main className="flex-1 min-w-0 flex flex-col bg-[#f0f0ef]">
          <TitleBar />
          <Ribbon />
          <section className="relative flex-1 flex flex-col bg-white overflow-hidden">
            <Scene />
            <div className="relative flex-1 w-[321px] mx-1 my-[4px] flex flex-col">
              <div className="flex items-center h-[27px] bg-[#f0f0ef] border border-[#c6c6c6] pl-[5px] pr-px text-[11px] text-[#6b6b6b]">
                <Rewind className="mr-[10px]" /> BROWSER
                <FaMinusCircle className="ml-auto mr-[6px] w-[10px] h-[10px] text-[#222]" />
                <Bars />
              </div>
              <Tree />
              <div className="mt-auto flex items-center h-[27px] bg-[#f0f0ef] border border-t-0 border-[#c6c6c6] pl-[26px] pr-px text-[11px] text-[#6b6b6b]">
                COMMENTS
                <FaPlusCircle className="ml-auto mr-[6px] w-[10px] h-[10px] text-[#222]" />
                <Bars />
              </div>
            </div>
            <MovePanel />

            {/* angle entry beside the manipulator */}
            <div className="absolute left-[1126px] top-[240px] flex items-center w-[144px] h-[24px] bg-[#f0f0ef] text-[11px] text-[#4a4a4a]">
              <span className="w-[4px] h-[20px] ml-[4px] border-x border-dotted border-[#c9c9c9]" />
              <span className="flex items-center w-[70px] h-[19px] ml-[18px] pl-[5px] bg-white border border-[#c4c4c4]">
                <input aria-label="Angle" defaultValue="-105.0 deg" className="w-[54px] outline-none" />
                <span className="w-[2px] h-[14px] bg-black" />
              </span>
              <button aria-label="Angle options" className="ml-[5px] mr-[10px]"><Caret /></button>
              <Pivot />
            </div>

            <NavBar />
            <span className="absolute right-[30px] bottom-[9px] text-[11px] leading-[14px] font-bold text-[#333]">Body12</span>
          </section>
          <Timeline />
        </main>
      </div>
      <Watermark />
      <div className="h-[4px] pl-[90px]"><div className="w-[50px] h-full bg-[#2a2a2a]" /></div>
    </div>
  )
}
